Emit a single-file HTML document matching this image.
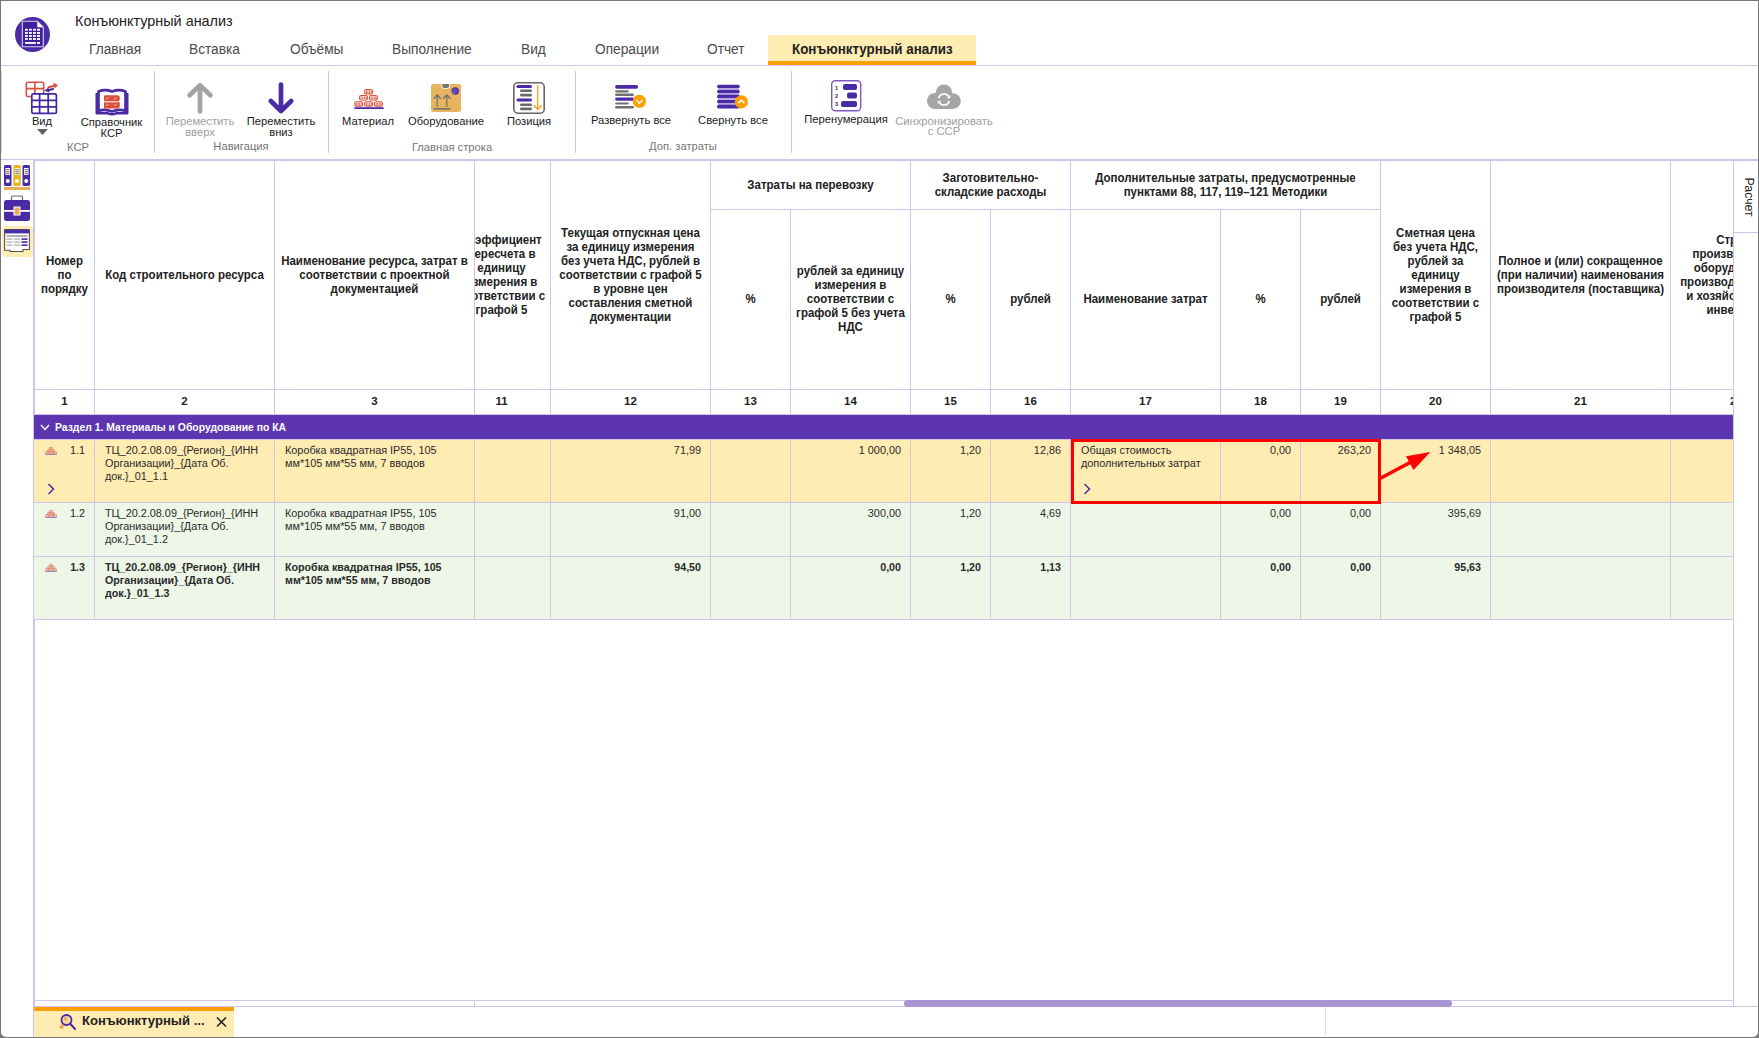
<!DOCTYPE html>
<html><head><meta charset="utf-8">
<style>
*{box-sizing:border-box;margin:0;padding:0}
html,body{width:1759px;height:1038px;overflow:hidden;background:#fff}
body{position:relative;font-family:"Liberation Sans",sans-serif;color:#212121}
.a{position:absolute}
.hl{position:absolute;height:1px;background:#d1c4e9}
.vl{position:absolute;width:1px;background:#d1c4e9}
.t{position:absolute;white-space:nowrap;line-height:1}
.tab{position:absolute;top:42px;font-size:13.7px;color:#4a4a4a;white-space:nowrap;line-height:14px;transform:scaleY(1.1);transform-origin:0 2px}
.rl{position:absolute;font-size:11.2px;color:#212121;text-align:center;line-height:11px;white-space:nowrap}
.rg{position:absolute;font-size:11.2px;color:#757575;text-align:center;line-height:11px;white-space:nowrap}
.dis{color:#9e9e9e}
/* table */
.hc{position:absolute;display:flex;align-items:center;justify-content:center;text-align:center;font-weight:bold;font-size:11.5px;line-height:14px;color:#212121;overflow:hidden}
.hc span{display:block;white-space:nowrap;flex-shrink:0}
.hc i{display:block;font-style:normal;transform:scaleY(1.1)}
.num{position:absolute;padding-bottom:3px;display:flex;align-items:center;justify-content:center;font-weight:bold;font-size:11.5px;color:#212121}
.cell{position:absolute;font-size:10.85px;line-height:13px;color:#2a2a2a;white-space:nowrap;overflow:hidden}
.r{text-align:right}
.b{font-weight:bold;font-size:10.7px}
</style></head><body>
<!-- window border -->
<div class="a" style="left:0;top:0;width:1759px;height:1px;background:#787878"></div>
<div class="a" style="left:0;top:0;width:1px;height:1038px;background:#787878"></div>
<div class="a" style="left:1758px;top:0;width:1px;height:1038px;background:#787878"></div>
<div class="a" style="left:0;top:1037px;width:1759px;height:1px;background:#787878"></div>

<!-- logo -->
<svg class="a" style="left:15px;top:17px" width="35" height="35" viewBox="0 0 35 35">
 <circle cx="17.5" cy="17.5" r="17.5" fill="#4a2aa5"/>
 <path d="M7.3 4.3 H22.3 L28.3 10.3 V29.8 H7.3 Z" fill="none" stroke="#d8cdf0" stroke-width="1.1"/>
 <path d="M8.6 5.6 H21.4 V11.2 H27 V28.5 H8.6 Z" fill="#3d1f99"/>
 <path d="M22.3 4.3 V10.3 H28.3 Z" fill="#fff"/>
 <g fill="#fff">
  <rect x="10" y="11.8" width="2.8" height="1.9"/><rect x="14" y="11.8" width="2.8" height="1.9"/><rect x="18" y="11.8" width="2.8" height="1.9"/><rect x="22" y="11.8" width="3" height="1.9"/>
  <rect x="10" y="15" width="2.8" height="1.9"/><rect x="14" y="15" width="2.8" height="1.9"/><rect x="18" y="15" width="2.8" height="1.9"/><rect x="22" y="15" width="3" height="1.9"/>
  <rect x="10" y="18" width="2.8" height="1.9"/><rect x="14" y="18" width="2.8" height="1.9"/><rect x="18" y="18" width="2.8" height="1.9"/><rect x="22" y="18" width="3" height="1.9"/>
  <rect x="10" y="21" width="2.8" height="1.9"/><rect x="14" y="21" width="2.8" height="1.9"/><rect x="18" y="21" width="2.8" height="1.9"/><rect x="22" y="21" width="3" height="1.9"/>
  <rect x="10" y="25" width="10.8" height="1.9"/><rect x="22" y="25" width="3" height="1.9"/>
 </g>
</svg>

<!-- title -->
<div class="t" style="left:75px;top:14px;font-size:14.4px;color:#212121">Конъюнктурный анализ</div>

<!-- tabs -->
<div class="tab" style="left:89px">Главная</div>
<div class="tab" style="left:189px">Вставка</div>
<div class="tab" style="left:290px">Объёмы</div>
<div class="tab" style="left:392px">Выполнение</div>
<div class="tab" style="left:521px">Вид</div>
<div class="tab" style="left:595px">Операции</div>
<div class="tab" style="left:707px">Отчет</div>
<div class="a" style="left:768px;top:35px;width:208px;height:26px;background:#ffecb3"></div>
<div class="a" style="left:768px;top:61px;width:208px;height:4px;background:#ffa000"></div>
<div class="tab" style="left:792px;font-weight:bold;color:#212121;font-size:13.4px">Конъюнктурный анализ</div>
<div class="hl" style="left:1px;top:65px;width:1757px"></div>

<!-- RIBBON -->

<!-- ribbon separators -->
<div class="vl" style="left:1px;top:71px;height:82px;background:#ddd3f0"></div>
<div class="vl" style="left:154px;top:71px;height:82px"></div>
<div class="vl" style="left:328px;top:71px;height:82px"></div>
<div class="vl" style="left:575px;top:71px;height:82px"></div>
<div class="vl" style="left:791px;top:71px;height:82px"></div>

<!-- Вид icon -->
<svg class="a" style="left:25px;top:81px" width="34" height="34" viewBox="0 0 34 34">
 <g fill="none" stroke="#d9513a" stroke-width="1.6">
  <path d="M1.3 14 V3 Q1.3 1.3 3 1.3 H17 Q18.7 1.3 18.7 3 V12"/>
  <path d="M1.3 7.6 H18.7 M9.8 1.3 V12"/>
  <path d="M1.3 14 Q1.3 15.5 3 15.5 H6"/>
 </g>
 <path d="M23.5 6.3 L29.5 4.8" stroke="#d9513a" stroke-width="2" stroke-linecap="round"/><path d="M28.3 1.6 L33 4.2 L29.6 7.6 Z" fill="#d9513a"/>
 <path d="M28 8 L23 9.2" stroke="#4527a0" stroke-width="2" stroke-linecap="round"/><path d="M23.4 6.4 L19.4 9.8 L24.4 11.6 Z" fill="#4527a0"/>
 <rect x="6.8" y="12.8" width="24.6" height="19.6" rx="1.5" fill="#fff" stroke="#4527a0" stroke-width="1.7"/>
 <path d="M6.8 19.3 H31.4 M6.8 25.9 H31.4 M14.6 12.8 V32.4 M23.2 12.8 V32.4" stroke="#4527a0" stroke-width="1.7"/>
</svg>
<div class="rl" style="left:26px;top:116px;width:32px">Вид</div>
<svg class="a" style="left:37px;top:129px" width="11" height="6" viewBox="0 0 11 6"><path d="M0 0 H11 L5.5 6 Z" fill="#616161"/></svg>

<!-- Справочник КСР icon -->
<svg class="a" style="left:95px;top:88px" width="34" height="28" viewBox="0 0 34 28">
 <path d="M3.5 3.5 Q10 0.8 17 3.5 Q24 0.8 30.5 3.5 V23 Q24 20.5 17 23.5 Q10 20.5 3.5 23 Z" fill="#fff" stroke="#4a2aa5" stroke-width="2.6" stroke-linejoin="round"/>
 <path d="M1.8 5 V25.3 H13 Q17 27.3 21 25.3 H32.2 V5" fill="none" stroke="#4a2aa5" stroke-width="2.6" stroke-linejoin="round"/>
 <path d="M10 7.2 H22.5 Q24.8 7.2 24.8 9.5 V11 Q24.8 13 23 13.2 Q24.8 13.6 24.8 15.5 V18 Q24.8 20.5 22.5 20.5 H10 Q9 20.5 9 19.5 V8.2 Q9 7.2 10 7.2 Z" fill="#d9513a"/>
 <path d="M9 13.8 H23" stroke="#fff" stroke-width="1"/>
 <path d="M11.5 11.2 l1.6 -1.6 M19.5 11.2 l1.6 -1.6 M11.5 17.8 l1.6 -1.6 M19.5 17.8 l1.6 -1.6" stroke="#fff" stroke-width="1"/>
</svg>
<div class="rl" style="left:70px;top:117px;width:83px">Справочник<br>КСР</div>
<div class="rg" style="left:58px;top:142px;width:40px">КСР</div>

<!-- Переместить вверх -->
<svg class="a" style="left:186px;top:81px" width="28" height="34" viewBox="0 0 28 34">
 <path d="M14 30.5 V4.5 M3.6 14.3 L14 4.2 L24.4 14.3" fill="none" stroke="#a5a5a5" stroke-width="4.7" stroke-linecap="round" stroke-linejoin="round"/>
</svg>
<div class="rl dis" style="left:158px;top:116px;width:84px">Переместить<br>вверх</div>
<!-- Переместить вниз -->
<svg class="a" style="left:267px;top:81px" width="28" height="34" viewBox="0 0 28 34">
 <path d="M14 3.5 V29.5 M3.8 20 L14 30 L24.2 20" fill="none" stroke="#4a2aa5" stroke-width="4.7" stroke-linecap="round" stroke-linejoin="round"/>
</svg>
<div class="rl" style="left:239px;top:116px;width:84px">Переместить<br>вниз</div>
<div class="rg" style="left:201px;top:141px;width:80px">Навигация</div>

<!-- Материал -->
<svg class="a" style="left:353px;top:88px" width="32" height="22" viewBox="0 0 32 22">
 <rect x="11.1" y="0.9" width="9" height="5.5" rx="2.2" fill="#d9513a"/><rect x="12.299999999999999" y="2.0" width="6.6" height="3.3" rx="0.8" fill="#fff"/><rect x="13.00" y="2.3" width="0.8" height="2.7" fill="#d9513a"/><rect x="14.55" y="2.3" width="0.8" height="2.7" fill="#d9513a"/><rect x="16.10" y="2.3" width="0.8" height="2.7" fill="#d9513a"/><rect x="17.65" y="2.3" width="0.8" height="2.7" fill="#d9513a"/><rect x="6" y="7" width="9" height="5.5" rx="2.2" fill="#d9513a"/><rect x="7.2" y="8.1" width="6.6" height="3.3" rx="0.8" fill="#fff"/><rect x="7.90" y="8.4" width="0.8" height="2.7" fill="#d9513a"/><rect x="9.45" y="8.4" width="0.8" height="2.7" fill="#d9513a"/><rect x="11.00" y="8.4" width="0.8" height="2.7" fill="#d9513a"/><rect x="12.55" y="8.4" width="0.8" height="2.7" fill="#d9513a"/><rect x="15.9" y="7" width="9" height="5.5" rx="2.2" fill="#d9513a"/><rect x="17.1" y="8.1" width="6.6" height="3.3" rx="0.8" fill="#fff"/><rect x="17.80" y="8.4" width="0.8" height="2.7" fill="#d9513a"/><rect x="19.35" y="8.4" width="0.8" height="2.7" fill="#d9513a"/><rect x="20.90" y="8.4" width="0.8" height="2.7" fill="#d9513a"/><rect x="22.45" y="8.4" width="0.8" height="2.7" fill="#d9513a"/><rect x="1.2" y="13.2" width="9" height="5.5" rx="2.2" fill="#d9513a"/><rect x="2.4" y="14.299999999999999" width="6.6" height="3.3" rx="0.8" fill="#fff"/><rect x="3.10" y="14.6" width="0.8" height="2.7" fill="#d9513a"/><rect x="4.65" y="14.6" width="0.8" height="2.7" fill="#d9513a"/><rect x="6.20" y="14.6" width="0.8" height="2.7" fill="#d9513a"/><rect x="7.75" y="14.6" width="0.8" height="2.7" fill="#d9513a"/><rect x="11.1" y="13.2" width="9" height="5.5" rx="2.2" fill="#d9513a"/><rect x="12.299999999999999" y="14.299999999999999" width="6.6" height="3.3" rx="0.8" fill="#fff"/><rect x="13.00" y="14.6" width="0.8" height="2.7" fill="#d9513a"/><rect x="14.55" y="14.6" width="0.8" height="2.7" fill="#d9513a"/><rect x="16.10" y="14.6" width="0.8" height="2.7" fill="#d9513a"/><rect x="17.65" y="14.6" width="0.8" height="2.7" fill="#d9513a"/><rect x="20.9" y="13.2" width="9" height="5.5" rx="2.2" fill="#d9513a"/><rect x="22.099999999999998" y="14.299999999999999" width="6.6" height="3.3" rx="0.8" fill="#fff"/><rect x="22.80" y="14.6" width="0.8" height="2.7" fill="#d9513a"/><rect x="24.35" y="14.6" width="0.8" height="2.7" fill="#d9513a"/><rect x="25.90" y="14.6" width="0.8" height="2.7" fill="#d9513a"/><rect x="27.45" y="14.6" width="0.8" height="2.7" fill="#d9513a"/>
 <rect x="1.2" y="19.3" width="29.7" height="1.7" rx="0.8" fill="#4a2aa5"/>
</svg>
<div class="rl" style="left:333px;top:116px;width:70px">Материал</div>

<!-- Оборудование -->
<svg class="a" style="left:431px;top:84px" width="30" height="28" viewBox="0 0 30 28">
 <rect x="0" y="0" width="30" height="28" rx="2.5" fill="#e9b45e"/>
 <path d="M10.4 0 H18.9 V2.6 Q18.9 4.7 16.8 4.7 H12.5 Q10.4 4.7 10.4 2.6 Z" fill="#fff"/>
 <path d="M11.2 0 H18.1 V2.2 Q18.1 3.9 16.4 3.9 H12.9 Q11.2 3.9 11.2 2.2 Z" fill="#777"/>
 <circle cx="24.2" cy="7" r="3.75" fill="#4a2aa5"/>
 <path d="M21.5 6 l3.5 3.5 M22.5 4.5 l3.7 3.7 M23.8 3.6 l2.8 2.8 M20.6 7.5 l3 3 M21.5 9.5 l3.5 -3.5 M22.5 10.5 l3.7 -3.7 M20.8 8 l3.3 -3.3" stroke="#9a86d0" stroke-width="0.5"/>
 <g fill="none" stroke="#6f6f6f" stroke-width="1.25">
  <path d="M6.25 23 V11 M2.6 14.8 L6.25 11 L9.9 14.8"/>
  <path d="M15.8 23 V11 M12.1 14.8 L15.8 11 L19.5 14.8"/>
 </g>
 <rect x="2.6" y="24" width="17.1" height="1.7" fill="#777"/>
</svg>
<div class="rl" style="left:401px;top:116px;width:90px">Оборудование</div>

<!-- Позиция -->
<svg class="a" style="left:513px;top:82px" width="32" height="32" viewBox="0 0 32 32">
 <rect x="0.8" y="0.8" width="30.4" height="30.4" rx="4" fill="#fff" stroke="#666" stroke-width="1.6"/>
 <rect x="3.5" y="3" width="15.5" height="3" rx="1.5" fill="#4a2aa5"/>
 <rect x="7" y="7.5" width="12" height="2.6" rx="1.3" fill="#6a6a6e"/>
 <rect x="7" y="11.8" width="12" height="2.6" rx="1.3" fill="#6a6a6e"/>
 <rect x="3.5" y="16.4" width="15.5" height="3" rx="1.5" fill="#4a2aa5"/>
 <rect x="7" y="21.4" width="12" height="2.6" rx="1.3" fill="#6a6a6e"/>
 <rect x="7" y="25.6" width="12" height="2.6" rx="1.3" fill="#6a6a6e"/>
 <path d="M20 10 H19 M20 24 H19" stroke="#bbb" stroke-width="0"/>
 <path d="M24.7 3.5 V27.5 M20.8 23.2 L24.7 27.6 L28.6 23.2" fill="none" stroke="#f39c12" stroke-width="1.3"/>
</svg>
<div class="rl" style="left:499px;top:116px;width:60px">Позиция</div>
<div class="rg" style="left:402px;top:142px;width:100px">Главная строка</div>

<!-- Развернуть все -->
<svg class="a" style="left:614px;top:84px" width="34" height="26" viewBox="0 0 34 26">
 <rect x="1.1" y="0.9" width="23" height="3.8" rx="1.9" fill="#4a2aa5"/>
 <rect x="1.1" y="6.2" width="13.7" height="2.2" rx="1.1" fill="#707070"/>
 <rect x="1.1" y="9.5" width="18.8" height="2.4" rx="1.2" fill="#707070"/>
 <rect x="1.1" y="13.4" width="19" height="3.3" rx="1.6" fill="#4a2aa5"/>
 <rect x="1.1" y="18.4" width="13.7" height="2.2" rx="1.1" fill="#707070"/>
 <rect x="1.1" y="22" width="18.8" height="2.4" rx="1.2" fill="#707070"/>
 <circle cx="25.4" cy="17.4" r="6.6" fill="#ffa000"/>
 <path d="M22.2 16 L25.4 19.2 L28.6 16" fill="none" stroke="#fff" stroke-width="1.5"/>
</svg>
<div class="rl" style="left:586px;top:115px;width:90px">Развернуть все</div>
<!-- Свернуть все -->
<svg class="a" style="left:716px;top:84px" width="34" height="26" viewBox="0 0 34 26">
 <rect x="2" y="2" width="21" height="21" fill="#b9a8e0"/>
 <rect x="1" y="0.7" width="22.8" height="3.4" rx="1.7" fill="#4a2aa5"/>
 <rect x="1" y="5.9" width="22.8" height="3.2" rx="1.6" fill="#4a2aa5"/>
 <rect x="1" y="10.8" width="22.8" height="3.1" rx="1.5" fill="#4a2aa5"/>
 <rect x="1" y="15.9" width="22.8" height="3.1" rx="1.5" fill="#4a2aa5"/>
 <rect x="1" y="20.8" width="22.8" height="3.8" rx="1.9" fill="#4a2aa5"/>
 <circle cx="25.4" cy="17.9" r="6.6" fill="#ffa000"/>
 <path d="M22.2 19.3 L25.4 16.1 L28.6 19.3" fill="none" stroke="#fff" stroke-width="1.5"/>
</svg>
<div class="rl" style="left:688px;top:115px;width:90px">Свернуть все</div>
<div class="rg" style="left:633px;top:141px;width:100px">Доп. затраты</div>

<!-- Перенумерация -->
<svg class="a" style="left:831px;top:80px" width="31" height="32" viewBox="0 0 31 32">
 <rect x="0.7" y="0.7" width="29" height="30" rx="3.5" fill="#fff" stroke="#7e57c2" stroke-width="1.4"/>
 <rect x="12" y="4" width="14" height="6" rx="2" fill="#4a2aa5"/>
 <rect x="16" y="12.5" width="10" height="6" rx="2" fill="#4a2aa5"/>
 <rect x="10" y="21" width="16" height="6" rx="2" fill="#4a2aa5"/>
 <text x="4" y="10" font-size="5.5" font-family="Liberation Sans" font-weight="bold" fill="#333">1</text>
 <text x="4" y="18" font-size="5.5" font-family="Liberation Sans" font-weight="bold" fill="#333">2</text>
 <text x="4" y="26" font-size="5.5" font-family="Liberation Sans" font-weight="bold" fill="#333">3</text>
</svg>
<div class="rl" style="left:801px;top:114px;width:90px">Перенумерация</div>

<!-- Синхронизировать -->
<svg class="a" style="left:927px;top:84px" width="34" height="26" viewBox="0 0 34 26">
 <g fill="#a5a5a5">
  <circle cx="17" cy="8.6" r="8.2"/><circle cx="8" cy="17" r="8"/><circle cx="26" cy="17" r="7.8"/>
  <rect x="8" y="12" width="18" height="13"/>
 </g>
 <g fill="none" stroke="#fff" stroke-width="1.7">
  <path d="M11.59 14.05 A5.6 5.6 0 0 1 21.59 12.29"/>
  <path d="M22.41 16.95 A5.6 5.6 0 0 1 12.41 18.71"/>
 </g>
 <path d="M23.08 14.42 L23.55 10.91 L19.62 13.66 Z M10.92 16.58 L10.45 20.09 L14.38 17.34 Z" fill="#fff"/>
</svg>
<div class="rl dis" style="left:889px;top:116px;width:110px;line-height:10px">Синхронизировать<br>с ССР</div>

<div class="hl" style="left:1px;top:159px;width:1757px"></div>


<!-- TABLE -->

<!-- sidebar -->
<div class="vl" style="left:33px;top:160px;height:877px"></div>
<div class="vl" style="left:34px;top:160px;height:846px"></div>
<svg class="a" style="left:4px;top:165px" width="26" height="25" viewBox="0 0 26 25">
 <rect x="0" y="0" width="7.5" height="21" rx="1.5" fill="#4a2aa5"/>
 <rect x="9.3" y="0" width="7.5" height="21" rx="1.5" fill="#e6b820"/>
 <rect x="18.5" y="0" width="7.5" height="21" rx="1.5" fill="#4a2aa5"/>
 <g fill="#fff"><rect x="1.5" y="3" width="4.5" height="7"/><rect x="10.8" y="3" width="4.5" height="7"/><rect x="20" y="3" width="4.5" height="7"/>
 <circle cx="3.75" cy="16" r="2"/><circle cx="13.05" cy="16" r="2"/><circle cx="22.25" cy="16" r="2"/></g>
 <g fill="#555"><rect x="2" y="4.3" width="3.5" height="0.9"/><rect x="2" y="6.3" width="3.5" height="0.9"/><rect x="2" y="8.3" width="3.5" height="0.9"/>
 <rect x="11.3" y="4.3" width="3.5" height="0.9"/><rect x="11.3" y="6.3" width="3.5" height="0.9"/><rect x="11.3" y="8.3" width="3.5" height="0.9"/>
 <rect x="20.5" y="4.3" width="3.5" height="0.9"/><rect x="20.5" y="6.3" width="3.5" height="0.9"/><rect x="20.5" y="8.3" width="3.5" height="0.9"/></g>
 <rect x="0" y="22" width="26" height="3" fill="#e8ad55"/>
</svg>
<svg class="a" style="left:4px;top:195px" width="26" height="27" viewBox="0 0 26 27">
 <path d="M7.5 5 V2.5 Q7.5 1 9 1 H17 Q18.5 1 18.5 2.5 V5" fill="none" stroke="#666" stroke-width="1.2"/>
 <rect x="0" y="5" width="26" height="21" rx="2.5" fill="#4a2aa5"/>
 <rect x="0" y="15" width="26" height="1.8" fill="#fff"/>
 <rect x="9.5" y="11.5" width="7" height="9" fill="#fff"/>
 <rect x="10.5" y="12.5" width="5" height="7" fill="#e8ad55"/>
</svg>
<div class="a" style="left:2px;top:226px;width:31px;height:31px;border-radius:4px;background:#ffecb3"></div>
<svg class="a" style="left:4px;top:229px" width="26" height="24" viewBox="0 0 26 24">
 <path d="M0.6 1.5 Q0.6 0.6 1.5 0.6 H24.5 Q25.4 0.6 25.4 1.5 V20.5 H19 V22.5 H6 V21.2 H0.6 Z" fill="#fff" stroke="#555" stroke-width="1.1"/>
 <rect x="0.6" y="0.6" width="24.8" height="3.8" fill="#4a2aa5"/>
 <rect x="2.5" y="6.5" width="21" height="1" fill="#666"/>
 <g fill="#aaa"><rect x="2.5" y="9.5" width="6" height="1.2"/><rect x="10" y="9.5" width="6" height="1.2"/>
 <rect x="2.5" y="12.5" width="6" height="1.2"/><rect x="10" y="12.5" width="6" height="1.2"/>
 <rect x="2.5" y="15.5" width="6" height="1.2"/><rect x="10" y="15.5" width="6" height="1.2"/></g>
 <g fill="#4a2aa5"><rect x="17.5" y="9.3" width="6" height="1.6"/><rect x="17.5" y="12.3" width="6" height="1.6"/><rect x="17.5" y="15.3" width="6" height="1.6"/></g>
</svg>
<div id="tbl" class="a" style="left:34px;top:160px;width:1699px;height:846px;overflow:hidden">
<div class="a" style="left:0;top:254px;width:1699px;height:25px;background:#5e35b1"></div>
<div class="a" style="left:0;top:279px;width:1699px;height:63px;background:#ffecb3"></div>
<div class="a" style="left:0;top:342px;width:1699px;height:117px;background:#eef6e7"></div>
<div class="vl" style="left:60px;top:0px;height:254px"></div>
<div class="vl" style="left:60px;top:279px;height:180px"></div>
<div class="vl" style="left:240px;top:0px;height:254px"></div>
<div class="vl" style="left:240px;top:279px;height:180px"></div>
<div class="vl" style="left:440px;top:0px;height:254px"></div>
<div class="vl" style="left:440px;top:279px;height:180px"></div>
<div class="vl" style="left:516px;top:0px;height:254px"></div>
<div class="vl" style="left:516px;top:279px;height:180px"></div>
<div class="vl" style="left:676px;top:0px;height:254px"></div>
<div class="vl" style="left:676px;top:279px;height:180px"></div>
<div class="vl" style="left:756px;top:49px;height:205px"></div>
<div class="vl" style="left:756px;top:279px;height:180px"></div>
<div class="vl" style="left:876px;top:0px;height:254px"></div>
<div class="vl" style="left:876px;top:279px;height:180px"></div>
<div class="vl" style="left:956px;top:49px;height:205px"></div>
<div class="vl" style="left:956px;top:279px;height:180px"></div>
<div class="vl" style="left:1036px;top:0px;height:254px"></div>
<div class="vl" style="left:1036px;top:279px;height:180px"></div>
<div class="vl" style="left:1186px;top:49px;height:205px"></div>
<div class="vl" style="left:1186px;top:279px;height:180px"></div>
<div class="vl" style="left:1266px;top:49px;height:205px"></div>
<div class="vl" style="left:1266px;top:279px;height:180px"></div>
<div class="vl" style="left:1346px;top:0px;height:254px"></div>
<div class="vl" style="left:1346px;top:279px;height:180px"></div>
<div class="vl" style="left:1456px;top:0px;height:254px"></div>
<div class="vl" style="left:1456px;top:279px;height:180px"></div>
<div class="vl" style="left:1636px;top:0px;height:254px"></div>
<div class="vl" style="left:1636px;top:279px;height:180px"></div>
<div class="hl" style="left:0;top:229px;width:1699px"></div>
<div class="hl" style="left:0;top:254px;width:1699px"></div>
<div class="hl" style="left:0;top:279px;width:1699px"></div>
<div class="hl" style="left:0;top:342px;width:1699px"></div>
<div class="hl" style="left:0;top:396px;width:1699px"></div>
<div class="hl" style="left:0;top:459px;width:1699px"></div>
<div class="hl" style="left:676px;top:49px;width:200px"></div>
<div class="hl" style="left:876px;top:49px;width:160px"></div>
<div class="hl" style="left:1036px;top:49px;width:310px"></div>
<div class="hc" style="left:1px;top:0px;width:59px;height:229px;"><span><i>Номер</i><i>по</i><i>порядку</i></span></div>
<div class="hc" style="left:61px;top:0px;width:179px;height:229px;"><span><i>Код строительного ресурса</i></span></div>
<div class="hc" style="left:241px;top:0px;width:199px;height:229px;"><span><i>Наименование ресурса, затрат в</i><i>соответствии с проектной</i><i>документацией</i></span></div>
<div class="hc" style="left:441px;top:0px;width:75px;height:229px;"><span style="margin-left:-22px"><i>Коэффициент</i><i>пересчета в</i><i>единицу</i><i>измерения в</i><i>соответствии с</i><i>графой 5</i></span></div>
<div class="hc" style="left:517px;top:0px;width:159px;height:229px;"><span><i>Текущая отпускная цена</i><i>за единицу измерения</i><i>без учета НДС, рублей в</i><i>соответствии с графой 5</i><i>в уровне цен</i><i>составления сметной</i><i>документации</i></span></div>
<div class="hc" style="left:677px;top:0px;width:199px;height:49px;"><span><i>Затраты на перевозку</i></span></div>
<div class="hc" style="left:677px;top:49px;width:79px;height:180px;"><span><i>%</i></span></div>
<div class="hc" style="left:757px;top:49px;width:119px;height:180px;"><span><i>рублей за единицу</i><i>измерения в</i><i>соответствии с</i><i>графой 5 без учета</i><i>НДС</i></span></div>
<div class="hc" style="left:877px;top:0px;width:159px;height:49px;"><span><i>Заготовительно-</i><i>складские расходы</i></span></div>
<div class="hc" style="left:877px;top:49px;width:79px;height:180px;"><span><i>%</i></span></div>
<div class="hc" style="left:957px;top:49px;width:79px;height:180px;"><span><i>рублей</i></span></div>
<div class="hc" style="left:1037px;top:0px;width:309px;height:49px;"><span><i>Дополнительные затраты, предусмотренные</i><i>пунктами 88, 117, 119–121 Методики</i></span></div>
<div class="hc" style="left:1037px;top:49px;width:149px;height:180px;"><span><i>Наименование затрат</i></span></div>
<div class="hc" style="left:1187px;top:49px;width:79px;height:180px;"><span><i>%</i></span></div>
<div class="hc" style="left:1267px;top:49px;width:79px;height:180px;"><span><i>рублей</i></span></div>
<div class="hc" style="left:1347px;top:0px;width:109px;height:229px;"><span><i>Сметная цена</i><i>без учета НДС,</i><i>рублей за</i><i>единицу</i><i>измерения в</i><i>соответствии с</i><i>графой 5</i></span></div>
<div class="hc" style="left:1457px;top:0px;width:179px;height:229px;"><span><i>Полное и (или) сокращенное</i><i>(при наличии) наименования</i><i>производителя (поставщика)</i></span></div>
<div class="hc" style="left:1643px;top:0px;width:119px;height:229px;"><span><i>Страна</i><i>производителя</i><i>оборудования,</i><i>производственного</i><i>и хозяйственного</i><i>инвентаря</i></span></div>
<div class="num" style="left:1px;top:230px;width:59px;height:24px">1</div>
<div class="num" style="left:61px;top:230px;width:179px;height:24px">2</div>
<div class="num" style="left:241px;top:230px;width:199px;height:24px">3</div>
<div class="num" style="left:441px;top:230px;width:53px;height:24px">11</div>
<div class="num" style="left:517px;top:230px;width:159px;height:24px">12</div>
<div class="num" style="left:677px;top:230px;width:79px;height:24px">13</div>
<div class="num" style="left:757px;top:230px;width:119px;height:24px">14</div>
<div class="num" style="left:877px;top:230px;width:79px;height:24px">15</div>
<div class="num" style="left:957px;top:230px;width:79px;height:24px">16</div>
<div class="num" style="left:1037px;top:230px;width:149px;height:24px">17</div>
<div class="num" style="left:1187px;top:230px;width:79px;height:24px">18</div>
<div class="num" style="left:1267px;top:230px;width:79px;height:24px">19</div>
<div class="num" style="left:1347px;top:230px;width:109px;height:24px">20</div>
<div class="num" style="left:1457px;top:230px;width:179px;height:24px">21</div>
<div class="num" style="left:1643px;top:230px;width:119px;height:24px">22</div>
<svg class="a" style="left:6px;top:264px" width="10" height="7" viewBox="0 0 10 7"><path d="M1 1 L5 5.5 L9 1" fill="none" stroke="#fff" stroke-width="1.3"/></svg>
<div class="t" style="left:21px;top:263px;font-size:10.4px;font-weight:bold;color:#fff">Раздел 1. Материалы и Оборудование по КА</div>
<svg class="a" style="left:11px;top:287px" width="12" height="8" viewBox="0 0 12 8"><g fill="none" stroke="#e0705a" stroke-width="0.8"><rect x="4.4" y="0.4" width="3.2" height="2" rx="0.8"/><rect x="2.4" y="2.6" width="3.2" height="2" rx="0.8"/><rect x="6.4" y="2.6" width="3.2" height="2" rx="0.8"/><rect x="0.4" y="4.8" width="3.6" height="2.2" rx="0.9"/><rect x="4.2" y="4.8" width="3.6" height="2.2" rx="0.9"/><rect x="8" y="4.8" width="3.6" height="2.2" rx="0.9"/></g><g fill="#e88a74"><rect x="5.5" y="0.8" width="1" height="1.2"/><rect x="3.5" y="3" width="1" height="1.2"/><rect x="7.5" y="3" width="1" height="1.2"/><rect x="1.7" y="5.3" width="1" height="1.2"/><rect x="5.5" y="5.3" width="1" height="1.2"/><rect x="9.3" y="5.3" width="1" height="1.2"/></g><rect x="0.3" y="7.2" width="11.4" height="0.8" fill="#8a70c8"/></svg>
<div class="cell r " style="left:-99px;top:284px;width:150px">1.1</div>
<div class="cell " style="left:71px;top:284px">ТЦ_20.2.08.09_{Регион}_{ИНН<br>Организации}_{Дата Об.<br>док.}_01_1.1</div>
<div class="cell " style="left:251px;top:284px">Коробка квадратная IP55, 105<br>мм*105 мм*55 мм, 7 вводов</div>
<div class="cell r " style="left:517px;top:284px;width:150px">71,99</div>
<div class="cell r " style="left:717px;top:284px;width:150px">1 000,00</div>
<div class="cell r " style="left:797px;top:284px;width:150px">1,20</div>
<div class="cell r " style="left:877px;top:284px;width:150px">12,86</div>
<div class="cell r " style="left:1107px;top:284px;width:150px">0,00</div>
<div class="cell r " style="left:1187px;top:284px;width:150px">263,20</div>
<div class="cell r " style="left:1297px;top:284px;width:150px">1 348,05</div>
<svg class="a" style="left:11px;top:350px" width="12" height="8" viewBox="0 0 12 8"><g fill="none" stroke="#e0705a" stroke-width="0.8"><rect x="4.4" y="0.4" width="3.2" height="2" rx="0.8"/><rect x="2.4" y="2.6" width="3.2" height="2" rx="0.8"/><rect x="6.4" y="2.6" width="3.2" height="2" rx="0.8"/><rect x="0.4" y="4.8" width="3.6" height="2.2" rx="0.9"/><rect x="4.2" y="4.8" width="3.6" height="2.2" rx="0.9"/><rect x="8" y="4.8" width="3.6" height="2.2" rx="0.9"/></g><g fill="#e88a74"><rect x="5.5" y="0.8" width="1" height="1.2"/><rect x="3.5" y="3" width="1" height="1.2"/><rect x="7.5" y="3" width="1" height="1.2"/><rect x="1.7" y="5.3" width="1" height="1.2"/><rect x="5.5" y="5.3" width="1" height="1.2"/><rect x="9.3" y="5.3" width="1" height="1.2"/></g><rect x="0.3" y="7.2" width="11.4" height="0.8" fill="#8a70c8"/></svg>
<div class="cell r " style="left:-99px;top:347px;width:150px">1.2</div>
<div class="cell " style="left:71px;top:347px">ТЦ_20.2.08.09_{Регион}_{ИНН<br>Организации}_{Дата Об.<br>док.}_01_1.2</div>
<div class="cell " style="left:251px;top:347px">Коробка квадратная IP55, 105<br>мм*105 мм*55 мм, 7 вводов</div>
<div class="cell r " style="left:517px;top:347px;width:150px">91,00</div>
<div class="cell r " style="left:717px;top:347px;width:150px">300,00</div>
<div class="cell r " style="left:797px;top:347px;width:150px">1,20</div>
<div class="cell r " style="left:877px;top:347px;width:150px">4,69</div>
<div class="cell r " style="left:1107px;top:347px;width:150px">0,00</div>
<div class="cell r " style="left:1187px;top:347px;width:150px">0,00</div>
<div class="cell r " style="left:1297px;top:347px;width:150px">395,69</div>
<svg class="a" style="left:11px;top:404px" width="12" height="8" viewBox="0 0 12 8"><g fill="none" stroke="#e0705a" stroke-width="0.8"><rect x="4.4" y="0.4" width="3.2" height="2" rx="0.8"/><rect x="2.4" y="2.6" width="3.2" height="2" rx="0.8"/><rect x="6.4" y="2.6" width="3.2" height="2" rx="0.8"/><rect x="0.4" y="4.8" width="3.6" height="2.2" rx="0.9"/><rect x="4.2" y="4.8" width="3.6" height="2.2" rx="0.9"/><rect x="8" y="4.8" width="3.6" height="2.2" rx="0.9"/></g><g fill="#e88a74"><rect x="5.5" y="0.8" width="1" height="1.2"/><rect x="3.5" y="3" width="1" height="1.2"/><rect x="7.5" y="3" width="1" height="1.2"/><rect x="1.7" y="5.3" width="1" height="1.2"/><rect x="5.5" y="5.3" width="1" height="1.2"/><rect x="9.3" y="5.3" width="1" height="1.2"/></g><rect x="0.3" y="7.2" width="11.4" height="0.8" fill="#8a70c8"/></svg>
<div class="cell r b" style="left:-99px;top:401px;width:150px">1.3</div>
<div class="cell b" style="left:71px;top:401px">ТЦ_20.2.08.09_{Регион}_{ИНН<br>Организации}_{Дата Об.<br>док.}_01_1.3</div>
<div class="cell b" style="left:251px;top:401px">Коробка квадратная IP55, 105<br>мм*105 мм*55 мм, 7 вводов</div>
<div class="cell r b" style="left:517px;top:401px;width:150px">94,50</div>
<div class="cell r b" style="left:717px;top:401px;width:150px">0,00</div>
<div class="cell r b" style="left:797px;top:401px;width:150px">1,20</div>
<div class="cell r b" style="left:877px;top:401px;width:150px">1,13</div>
<div class="cell r b" style="left:1107px;top:401px;width:150px">0,00</div>
<div class="cell r b" style="left:1187px;top:401px;width:150px">0,00</div>
<div class="cell r b" style="left:1297px;top:401px;width:150px">95,63</div>
<svg class="a" style="left:13px;top:323px" width="8" height="12" viewBox="0 0 8 12"><path d="M1.5 1 L6.5 6 L1.5 11" fill="none" stroke="#4a2aa5" stroke-width="1.5"/></svg>
<div class="cell " style="left:1047px;top:284px">Общая стоимость<br>дополнительных затрат</div>
<svg class="a" style="left:1049px;top:323px" width="8" height="12" viewBox="0 0 8 12"><path d="M1.5 1 L6.5 6 L1.5 11" fill="none" stroke="#4a2aa5" stroke-width="1.5"/></svg>
</div>

<div class="hl" style="left:33px;top:160px;width:1725px"></div>
<div class="vl" style="left:1733px;top:160px;height:847px"></div>
<div class="hl" style="left:1733px;top:232px;width:25px"></div>
<div class="t" style="left:1729px;top:191px;width:39px;height:12px;font-size:12.3px;color:#212121;transform:rotate(90deg);text-align:center">Расчет</div>



<!-- annotation -->
<div class="a" style="left:1071px;top:439px;width:310px;height:65px;border:3px solid #ff0000"></div>
<svg class="a" style="left:1370px;top:440px" width="70" height="45" viewBox="0 0 70 45">
 <path d="M9.5 38.8 L41 22" stroke="#ff0000" stroke-width="3.5" stroke-linecap="butt"/>
 <path d="M60.4 12.1 L36 16.3 L43.5 29.9 Z" fill="#ff0000"/>
</svg>
<!-- BOTTOM -->

<!-- bottom -->
<div class="hl" style="left:34px;top:1000px;width:1699px"></div>
<div class="hl" style="left:34px;top:1006px;width:1724px"></div>
<div class="vl" style="left:474px;top:1000px;height:6px"></div>
<div class="a" style="left:904px;top:1000px;width:548px;height:7px;border-radius:3.5px;background:#a995d4"></div>
<div class="vl" style="left:1325px;top:1007px;height:28px;background:#e0e0e0"></div>
<div class="a" style="left:34px;top:1007px;width:200px;height:30px;background:#ffecb3"></div>
<div class="a" style="left:34px;top:1007px;width:200px;height:4px;background:#ffa000"></div>
<svg class="a" style="left:57px;top:1013px" width="20" height="18" viewBox="0 0 20 18">
 <path d="M2 14 L5 11 L7.5 13.5 L4.5 16.5 Z" fill="#e8ad55"/>
 <circle cx="9.5" cy="7" r="5" fill="#f5d9a0" stroke="#4a2aa5" stroke-width="1.8"/>
 <circle cx="8.5" cy="6" r="1.8" fill="#e8ad55"/>
 <path d="M13 10.5 L18 16" stroke="#4a2aa5" stroke-width="2" stroke-linecap="round"/>
</svg>
<div class="t" style="left:82px;top:1014px;font-size:13.1px;font-weight:bold;color:#212121">Конъюнктурный ...</div>
<svg class="a" style="left:216px;top:1017px" width="11" height="10" viewBox="0 0 11 10"><path d="M1 0.5 L10 9.5 M10 0.5 L1 9.5" stroke="#212121" stroke-width="1.5"/></svg>


<svg class="a" style="left:0;top:1030px" width="8" height="8" viewBox="0 0 8 8"><path d="M0 0 V8 H8 V7 H6 A5 5 0 0 1 1 2 V0 Z" fill="#787878"/></svg>
<svg class="a" style="left:1751px;top:1030px" width="8" height="8" viewBox="0 0 8 8"><path d="M8 0 V8 H0 V7 H2 A5 5 0 0 0 7 2 V0 Z" fill="#787878"/></svg>
</body></html>
